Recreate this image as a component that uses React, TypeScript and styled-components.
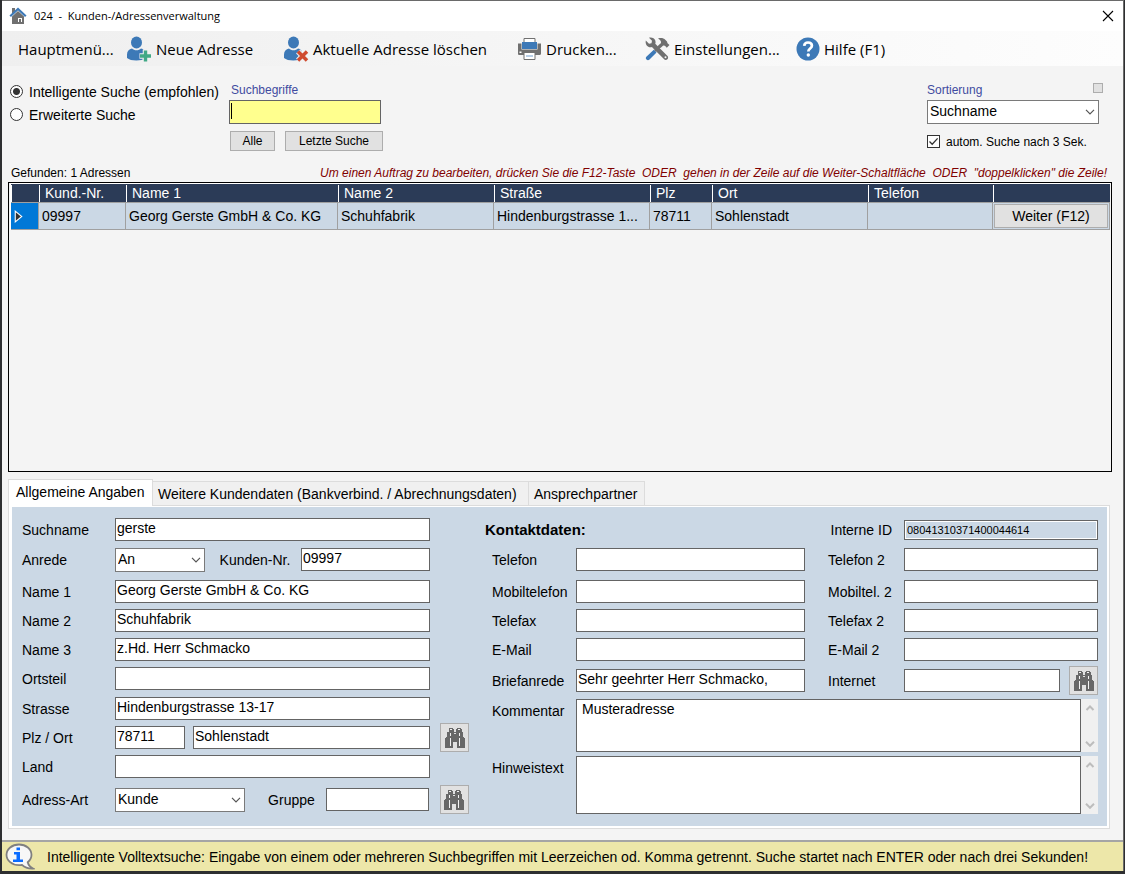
import React from "react";
import styled, { createGlobalStyle } from "styled-components";

const blue = "#3d79b7";
const gray = "#707070";
const panelBlue = "#cbd8e5";
const navy = "#2b3b57";

const GlobalStyle = createGlobalStyle`
  *, *::before, *::after { box-sizing: border-box; }
  body {
    margin: 0;
    background: #2e2f31;
    color: #000;
    font-family: "Liberation Sans", Arial, sans-serif;
    font-size: 14px;
    line-height: 20px;
  }
  button, input, select, textarea { font: inherit; color: inherit; border-radius: 0; margin: 0; }
`;

const Desktop = styled.div`
  display: flex;
  flex-direction: column;
  min-height: 100vh;
  padding: 0 1px 3px 2px;
`;

const Window = styled.main`
  flex: 1;
  display: flex;
  flex-direction: column;
  background: #f4f4f4;
  border-top: 1px solid #6a6a6a;
  border-right: 1px solid #6a6a6a;
`;

const TitleBar = styled.header`
  display: flex;
  align-items: center;
  height: 30px;
  padding: 0 9px 0 7px;
  gap: 7px;
  background: #fff;
  font-family: "Open Sans", "Noto Sans", sans-serif;
  font-size: 11px;
`;

const Title = styled.h1`
  flex: 1;
  margin: 0;
  font: inherit;
  white-space: pre;
`;

const CloseButton = styled.button`
  display: flex;
  padding: 0;
  border: 0;
  background: none;
`;

const Toolbar = styled.nav`
  display: flex;
  align-items: center;
  height: 35px;
  padding-left: 16px;
  background: linear-gradient(90deg, #efefef, #fdfdfd);
`;

const ToolButton = styled.button<{ $width: number }>`
  display: flex;
  align-items: center;
  gap: 4px;
  min-width: ${(p) => p.$width}px;
  padding: 0;
  border: 0;
  background: none;
  font-family: "Open Sans", "Noto Sans", sans-serif;
  font-size: 15px;
  white-space: nowrap;
`;

const Content = styled.div`
  flex: 1;
  display: flex;
  flex-direction: column;
  padding: 13px 11px 11px 6px;
`;

const SearchArea = styled.section`
  display: flex;
  align-items: flex-start;
  height: 84px;
`;

const ModeGroup = styled.div`
  width: 221px;
  padding-top: 1px;
`;

const ChoiceLabel = styled.label<{ $small?: boolean }>`
  display: flex;
  align-items: center;
  gap: 6px;
  height: 23px;
  padding-left: ${(p) => (p.$small ? 0 : 2)}px;
  font-size: ${(p) => (p.$small ? 12 : 14)}px;
  white-space: nowrap;
`;

const Radio = styled.input`
  appearance: none;
  width: 13px;
  height: 13px;
  border: 1px solid #333;
  border-radius: 50%;
  background: #fff;
  &:checked { background: radial-gradient(circle, #333 3px, #fff 4px); }
`;

const Check = styled.input`
  appearance: none;
  width: 13px;
  height: 13px;
  border: 1px solid #333;
  background: #fff;
  &:checked {
    background: #fff url("data:image/svg+xml,%3Csvg xmlns='http://www.w3.org/2000/svg' viewBox='0 0 11 11'%3E%3Cpath d='M1.5 5.5l2.7 2.7L9.6 2.4' fill='none' stroke='%23333' stroke-width='1.3'/%3E%3C/svg%3E");
  }
`;

const SearchColumn = styled.div`
  display: flex;
  flex-direction: column;
  flex: 1;
  align-items: flex-start;
`;

const SortColumn = styled.div`
  display: flex;
  flex-direction: column;
  width: 185px;
`;

const CaptionRow = styled.div`
  display: flex;
  justify-content: space-between;
  align-items: flex-start;
  width: 100%;
  height: 21px;
  padding-right: 9px;
`;

const Caption = styled.label<{ $indent?: boolean }>`
  padding-left: ${(p) => (p.$indent ? 2 : 0)}px;
  color: #3f4ba0;
  font-size: 12px;
  line-height: 23px;
`;

const MiniButton = styled.button`
  width: 10px;
  height: 10px;
  margin-top: 4px;
  padding: 0;
  border: 1px solid #adadad;
  background: #e1e1e1;
`;

const SearchInput = styled.input`
  width: 152px;
  height: 24px;
  padding: 0 3px;
  border: 1px solid #646464;
  background: linear-gradient(#000, #000) 1px 2px / 1px 16px no-repeat, #ffff8e;
  outline: none;
`;

const ButtonRow = styled.div`
  display: flex;
  gap: 10px;
  padding: 7px 0 0 1px;
`;

const CheckRow = styled.div`
  padding-top: 6px;
`;

const PushButton = styled.button<{ $width: number }>`
  width: ${(p) => p.$width}px;
  height: 20px;
  padding: 0;
  border: 1px solid #adadad;
  background: #e1e1e1;
  font-size: 12px;
  line-height: 18px;
`;

const SelectBox = styled.div<{ $width: number }>`
  display: grid;
  flex: none;
  width: ${(p) => p.$width}px;
  height: 24px;
  border: 1px solid #7a7a7a;
  background: #fff;
  & > * { grid-area: 1 / 1; }
  & > svg { align-self: center; justify-self: end; margin-right: 3px; pointer-events: none; }
`;

const NativeSelect = styled.select`
  appearance: none;
  width: 100%;
  padding: 0 20px 2px 2px;
  border: 0;
  background: none;
  outline: none;
`;

const HintRow = styled.div`
  display: flex;
  justify-content: space-between;
  height: 19px;
  padding: 0 5px 0 3px;
  font-size: 12px;
  line-height: 21px;
  white-space: pre;
`;

const Hint = styled.em`
  color: #800000;
`;

const GridFrame = styled.section`
  flex: 1;
  min-height: 120px;
  border: 1px solid #000;
  padding: 1px 1px 0;
`;

const Grid = styled.table`
  width: 100%;
  table-layout: fixed;
  border-collapse: separate;
  border-spacing: 0;
  border-left: 1px solid #fff;
  box-shadow: 0 -1px 0 #fff;
`;

const HeadCell = styled.th`
  height: 19px;
  padding: 0 0 0 6px;
  background: linear-gradient(#fff, #fff) 0 1px / 1px 17px no-repeat, ${navy};
  color: #fff;
  font-weight: 400;
  line-height: 18px;
  text-align: left;
  border-bottom: 1px solid #a0a0a0;
`;

const Cell = styled.td<{ $action?: boolean }>`
  height: 27px;
  padding: ${(p) => (p.$action ? "1px" : "0 2px 0 3px")};
  background: ${panelBlue};
  border-right: 1px solid #a0a0a0;
  border-bottom: 1px solid #a0a0a0;
  white-space: nowrap;
`;

const MarkerCell = styled(Cell)`
  background: #0078d7;
  line-height: 0;
`;

const NextButton = styled.button`
  display: block;
  width: 100%;
  height: 24px;
  padding: 0;
  border: 1px solid #adadad;
  background: #e1e1e1;
  line-height: 22px;
`;

const TabList = styled.div`
  display: flex;
  align-items: flex-end;
  height: 33px;
`;

const Tab = styled.button<{ $width: number; $active?: boolean }>`
  position: relative;
  min-width: ${(p) => p.$width}px;
  height: ${(p) => (p.$active ? 27 : 24)}px;
  margin-bottom: ${(p) => (p.$active ? -1 : 0)}px;
  padding: ${(p) => (p.$active ? "0 7px 2px" : "0 5px")};
  border: 1px solid #dcdcdc;
  border-left-width: ${(p) => (p.$active ? 1 : 0)}px;
  border-bottom: 0;
  background: ${(p) => (p.$active ? "#fff" : "#f0f0f0")};
  line-height: 22px;
  text-align: left;
  white-space: nowrap;
`;

const TabPanel = styled.section`
  margin-right: 2px;
  padding: 1px 2px 2px 3px;
  border: 1px solid #dcdcdc;
  background: #fff;
`;

const Form = styled.form`
  display: flex;
  gap: 16px;
  padding: 11px 9px 10px 10px;
  background: ${panelBlue};
`;

const AddressGrid = styled.div`
  flex: none;
  display: grid;
  grid-template-columns: 93px 315px 39px;
  grid-template-rows: 30px 32px 29px 29px 29px 30px 29px 29px 33px 28px;
  align-items: start;
`;

const ContactGrid = styled.div`
  flex: 1;
  display: grid;
  grid-template-columns: 91px minmax(0, 229fr) 99px minmax(0, 194fr);
  grid-template-rows: 30px 32px 29px 29px 31px 30px 57px 58px;
  align-items: start;
`;

const FieldLabel = styled.label<{ $indent?: number }>`
  padding-left: ${(p) => p.$indent ?? 0}px;
  line-height: 24px;
  white-space: nowrap;
`;

const IdLabel = styled(FieldLabel)`
  justify-self: end;
  padding-right: 12px;
`;

const GroupTitle = styled.h2`
  grid-column: span 2;
  margin: 0;
  font-size: 15px;
  line-height: 24px;
`;

const Line = styled.div<{ $gap?: number; $wide?: boolean }>`
  display: flex;
  align-items: center;
  justify-content: space-between;
  gap: ${(p) => p.$gap ?? 0}px;
  height: 23px;
  grid-column: ${(p) => (p.$wide ? "span 2" : "auto")};
`;

const TextInput = styled.input<{ $width?: number }>`
  width: ${(p) => (p.$width ? `${p.$width}px` : "100%")};
  min-width: 0;
  height: 23px;
  padding: 0 2px 3px 1px;
  border: 1px solid #646464;
  background: #fff;
  outline: none;
`;

const IdInput = styled(TextInput)`
  height: 20px;
  margin-top: 2px;
  padding: 0 2px 1px;
  background: ${panelBlue};
  box-shadow: inset 0 0 0 1px #fff;
  font-size: 11px;
`;

const IconButton = styled.button`
  flex: none;
  display: flex;
  align-items: center;
  justify-content: center;
  width: 29px;
  height: 29px;
  padding: 0;
  border: 1px solid #adadad;
  background: #e1e1e1;
`;

const MemoBox = styled.div<{ $height: number }>`
  grid-column: span 3;
  display: flex;
  height: ${(p) => p.$height}px;
`;

const Memo = styled.textarea`
  flex: 1;
  padding: 0 5px;
  border: 1px solid #646464;
  background: #fff;
  line-height: 18px;
  resize: none;
  outline: none;
  overflow: hidden;
`;

const ScrollRail = styled.div`
  display: flex;
  flex-direction: column;
  justify-content: space-between;
  align-items: center;
  width: 17px;
  padding: 6px 0 5px;
  background: #f0f0f0;
`;

const StatusBar = styled.footer`
  display: flex;
  align-items: center;
  gap: 12px;
  height: 31px;
  padding-left: 3px;
  border-top: 2px solid #a5a5a5;
  background: #ede7a9;
  white-space: nowrap;
`;

const HomeIcon = () => (
  <svg width="18" height="18" viewBox="0 0 18 18" aria-hidden="true">
    <path d="M3 1h3v3L3 7z" fill={gray} />
    <path d="M3 9.500L9 4l6 5.500V17H3z" fill={gray} />
    <path d="M9 11h4v4H9z" fill="#fff" />
    <path d="M10 12h2v3h-2z" fill={gray} />
    <path d="M1.200 9.200L9 2l7.800 7.200" fill="none" stroke={blue} strokeWidth="2.200" />
  </svg>
);

const PersonIcon = ({ remove }: { remove?: boolean }) => (
  <svg width="26" height="26" viewBox="0 0 26 26" aria-hidden="true">
    <ellipse cx="10.500" cy="6.500" rx="5.500" ry="6" fill={blue} />
    <path d="M1 22v-3.500c0-3 2-5.500 5-6 1.200 1.200 2.700 1.800 4.500 1.800s3.300-.6 4.500-1.800c2.500.4 4.300 2.300 4.300 5V22c-2 1.700-5 2.500-9 2.500S3 23.700 1 22z" fill={blue} />
    {remove ? (
      <path d="M15 15.500l9 9M24 15.500l-9 9" stroke="#f1f1f1" strokeWidth="5.500" />
    ) : (
      <path d="M19.500 13.500v12.500M13.500 20H26" stroke="#f1f1f1" strokeWidth="5.500" />
    )}
    {remove ? (
      <path d="M15 15.500l9 9M24 15.500l-9 9" stroke="#cf4a2e" strokeWidth="3.500" />
    ) : (
      <path d="M19.500 14.500v11M14 20h11" stroke="#41a986" strokeWidth="3.400" />
    )}
  </svg>
);

const PrinterIcon = () => (
  <svg width="25" height="24" viewBox="0 0 25 24" aria-hidden="true">
    <path d="M1 6.500h3.500v6h16v-6H24v10c0 .8-.5 1.500-1.500 1.500h-20C1.500 18 1 17.500 1 16.500z" fill={gray} />
    <path d="M7 1.500h11v4H7z" fill="#fff" stroke={gray} />
    <path d="M5 5h15v7H5z" fill={blue} />
    <path d="M7 15.500h11v7H7z" fill="#fff" stroke={gray} />
    <path d="M9 18h7v2H9z" fill="#b9cfe6" />
    <path d="M2.500 14.500h2v1.500h-2z" fill="#fff" />
  </svg>
);

const ToolsIcon = () => (
  <svg width="25" height="24" viewBox="0 0 25 24" aria-hidden="true">
    <path d="M15.500 8.500L10 14" stroke={gray} strokeWidth="2.500" />
    <path d="M13 1.500c3-1 5.500-.5 7.500 1.500l1.500 1.500.5 1.700L24.500 8l-2.700 2.700-1.900-1.900-1.700-.2-2.700 2.400-2.300-2.300L16 6c.2-2-.8-3.400-3-4.500z" fill={gray} />
    <path d="M8.800 12.800l2.700 2.700-7 7c-1 1-2 1-3 .1s-.9-2 .1-3z" fill={blue} />
    <path d="M.8 3.500L4 6.700l2.500-.5.500-2.500L4 .8c2.700-.7 5.500.4 6.300 2.600.4 1.200.4 2.200 0 3.300l12 12c1.100 1.100 1.100 2.500.1 3.500s-2.500 1-3.500-.1l-12-12c-1.200.4-2.500.2-3.600-.4C1.200 8.600.2 6.200.8 3.500z" fill={gray} />
    <circle cx="20.500" cy="20.300" r="1" fill="#f4f4f4" />
  </svg>
);

const HelpIcon = () => (
  <svg width="24" height="24" viewBox="0 0 24 24" aria-hidden="true">
    <circle cx="12" cy="12" r="11.500" fill={blue} />
    <path d="M8.200 8.800C8.400 6.600 10 5.500 12 5.500c2.300 0 3.900 1.200 3.900 3.200 0 2.800-3.600 2.800-3.600 5.800" fill="none" stroke="#fff" strokeWidth="2.700" />
    <circle cx="12.300" cy="18" r="1.700" fill="#fff" />
  </svg>
);

const CloseIcon = () => (
  <svg width="12" height="12" viewBox="0 0 12 12" aria-hidden="true">
    <path d="M1 1l10 10M11 1L1 11" stroke="#000" strokeWidth="1.100" />
  </svg>
);

const Chevron = ({ up, heavy }: { up?: boolean; heavy?: boolean }) => (
  <svg width="10" height="6" viewBox="0 0 10 6" aria-hidden="true">
    <path
      d={up ? "M1.500 5L5 1.500 8.500 5" : "M1 .8L5 4.800 9 .8"}
      fill="none"
      stroke={heavy ? "#bdbdbd" : "#555"}
      strokeWidth={heavy ? 2 : 1.2}
    />
  </svg>
);

const BinocularsIcon = () => (
  <svg width="20" height="20" viewBox="0 0 20 20" shapeRendering="crispEdges" aria-hidden="true">
    <path d="M4 0h4v1h1v3h2V1h1V0h4v1h1v3h1v5h1v1h1v10h-8v-6H8v6H0V10h1V9h1V4h2z" fill="#686868" />
    <path d="M5 1h2v1H5zM13 1h2v1h-2zM5 5h1v3H5zM14 5h1v3h-1zM5 10h1v8H5zM14 10h1v8h-1z" fill="#f2f2f2" />
    <path d="M9 5h2v1H9z" fill="#e1e1e1" />
  </svg>
);

const InfoIcon = () => (
  <svg width="30" height="28" viewBox="0 0 30 28" aria-hidden="true">
    <path d="M14 1.500c7 0 12.500 4.500 12.500 10.300 0 3-1.400 5.600-3.800 7.500.6 2.500 2.500 4.800 5.300 6.200-4.500.2-8.300-1-11-3.600-1 .2-2 .3-3 .3C7 22.200 1.500 17.600 1.500 11.800S7 1.500 14 1.500z" fill="#f7f7f7" stroke="#808080" strokeWidth="1.800" />
    <path d="M11.500 4.500H15v2.700h-3.500zM9 9h6v7.500h3V19H8v-2.500h3.500v-5H9z" fill="#0a6cff" />
  </svg>
);

type Option = { id: string; width: number; value: string };

const Dropdown = ({ id, width, value }: Option) => (
  <SelectBox $width={width}>
    <NativeSelect id={id} defaultValue={value}>
      <option>{value}</option>
    </NativeSelect>
    <Chevron />
  </SelectBox>
);

const MemoField = ({ id, height, value }: { id: string; height: number; value: string }) => (
  <MemoBox $height={height}>
    <Memo id={id} defaultValue={value} />
    <ScrollRail>
      <Chevron up heavy />
      <Chevron heavy />
    </ScrollRail>
  </MemoBox>
);

const FindButton = ({ label }: { label: string }) => (
  <IconButton type="button" aria-label={label}>
    <BinocularsIcon />
  </IconButton>
);

const tools = [
  { text: "Hauptmenü...", width: 108, icon: null },
  { text: "Neue Adresse", width: 157, icon: <PersonIcon /> },
  { text: "Aktuelle Adresse löschen", width: 234, icon: <PersonIcon remove /> },
  { text: "Drucken...", width: 128, icon: <PrinterIcon /> },
  { text: "Einstellungen...", width: 151, icon: <ToolsIcon /> },
  { text: "Hilfe (F1)", width: 95, icon: <HelpIcon /> },
];

const columns: { title: string; width?: number }[] = [
  { title: "Kund.-Nr.", width: 87 },
  { title: "Name 1" },
  { title: "Name 2", width: 156 },
  { title: "Straße", width: 156 },
  { title: "Plz", width: 62 },
  { title: "Ort", width: 156 },
  { title: "Telefon", width: 125 },
  { title: "", width: 117 },
];

const address = ["09997", "Georg Gerste GmbH & Co. KG", "Schuhfabrik", "Hindenburgstrasse 1...", "78711", "Sohlenstadt", ""];

const contacts = [
  ["Telefon", "Telefon 2"],
  ["Mobiltelefon", "Mobiltel. 2"],
  ["Telefax", "Telefax 2"],
  ["E-Mail", "E-Mail 2"],
];

const WideField = ({ label, value }: { label: string; value: string }) => (
  <>
    <FieldLabel htmlFor={label}>{label}</FieldLabel>
    <TextInput id={label} defaultValue={value} />
    <span />
  </>
);

export default function App() {
  return (
    <Desktop>
      <GlobalStyle />
      <Window>
        <TitleBar>
          <HomeIcon />
          <Title>{"024  -  Kunden-/Adressenverwaltung"}</Title>
          <CloseButton type="button" aria-label="Schließen">
            <CloseIcon />
          </CloseButton>
        </TitleBar>
        <Toolbar>
          {tools.map((t) => (
            <ToolButton key={t.text} type="button" $width={t.width}>
              {t.icon}
              {t.text}
            </ToolButton>
          ))}
        </Toolbar>
        <Content>
          <SearchArea>
            <ModeGroup>
              <ChoiceLabel>
                <Radio type="radio" name="mode" defaultChecked />
                Intelligente Suche (empfohlen)
              </ChoiceLabel>
              <ChoiceLabel>
                <Radio type="radio" name="mode" />
                Erweiterte Suche
              </ChoiceLabel>
            </ModeGroup>
            <SearchColumn>
              <CaptionRow>
                <Caption htmlFor="terms" $indent>Suchbegriffe</Caption>
              </CaptionRow>
              <SearchInput id="terms" />
              <ButtonRow>
                <PushButton type="button" $width={45}>Alle</PushButton>
                <PushButton type="button" $width={98}>Letzte Suche</PushButton>
              </ButtonRow>
            </SearchColumn>
            <SortColumn>
              <CaptionRow>
                <Caption htmlFor="sort">Sortierung</Caption>
                <MiniButton type="button" aria-label="Optionen" />
              </CaptionRow>
              <Dropdown id="sort" width={172} value="Suchname" />
              <CheckRow>
                <ChoiceLabel $small>
                  <Check type="checkbox" defaultChecked />
                  autom. Suche nach 3 Sek.
                </ChoiceLabel>
              </CheckRow>
            </SortColumn>
          </SearchArea>
          <HintRow>
            <span>Gefunden: 1 Adressen</span>
            <Hint>{'Um einen Auftrag zu bearbeiten, drücken Sie die F12-Taste  ODER  gehen in der Zeile auf die Weiter-Schaltfläche  ODER  "doppelklicken" die Zeile!'}</Hint>
          </HintRow>
          <GridFrame>
            <Grid>
              <colgroup>
                <col style={{ width: 28 }} />
                {columns.map((c, i) => (
                  <col key={i} style={{ width: c.width }} />
                ))}
              </colgroup>
              <thead>
                <tr>
                  <HeadCell />
                  {columns.map((c, i) => (
                    <HeadCell key={i}>{c.title}</HeadCell>
                  ))}
                </tr>
              </thead>
              <tbody>
                <tr>
                  <MarkerCell>
                    <svg width="9" height="13" viewBox="0 0 8 12" aria-hidden="true">
                      <path d="M1 1l6 5-6 5z" fill="#333" stroke="#fff" />
                    </svg>
                  </MarkerCell>
                  {address.map((v, i) => (
                    <Cell key={i}>{v}</Cell>
                  ))}
                  <Cell $action>
                    <NextButton type="button">Weiter (F12)</NextButton>
                  </Cell>
                </tr>
              </tbody>
            </Grid>
          </GridFrame>
          <TabList role="tablist">
            <Tab type="button" role="tab" aria-selected $active $width={145}>Allgemeine Angaben</Tab>
            <Tab type="button" role="tab" $width={376}>Weitere Kundendaten (Bankverbind. / Abrechnungsdaten)</Tab>
            <Tab type="button" role="tab" $width={116}>Ansprechpartner</Tab>
          </TabList>
          <TabPanel role="tabpanel">
            <Form>
              <AddressGrid>
                <WideField label="Suchname" value="gerste" />
                <FieldLabel htmlFor="anrede">Anrede</FieldLabel>
                <Line>
                  <Dropdown id="anrede" width={90} value="An" />
                  <FieldLabel htmlFor="kdnr" $indent={4}>Kunden-Nr.</FieldLabel>
                  <TextInput id="kdnr" $width={129} defaultValue="09997" />
                </Line>
                <span />
                <WideField label="Name 1" value="Georg Gerste GmbH & Co. KG" />
                <WideField label="Name 2" value="Schuhfabrik" />
                <WideField label="Name 3" value="z.Hd. Herr Schmacko" />
                <WideField label="Ortsteil" value="" />
                <WideField label="Strasse" value="Hindenburgstrasse 13-17" />
                <FieldLabel htmlFor="plz">Plz / Ort</FieldLabel>
                <Line $gap={10} $wide>
                  <Line $gap={8}>
                    <TextInput id="plz" $width={70} defaultValue="78711" />
                    <TextInput aria-label="Ort" $width={237} defaultValue="Sohlenstadt" />
                  </Line>
                  <FindButton label="Ort suchen" />
                </Line>
                <WideField label="Land" value="" />
                <FieldLabel htmlFor="art">Adress-Art</FieldLabel>
                <Line $gap={10} $wide>
                  <Dropdown id="art" width={130} value="Kunde" />
                  <FieldLabel htmlFor="gruppe" $indent={12}>Gruppe</FieldLabel>
                  <TextInput id="gruppe" $width={103} />
                  <FindButton label="Gruppe suchen" />
                </Line>
              </AddressGrid>
              <ContactGrid>
                <GroupTitle>Kontaktdaten:</GroupTitle>
                <IdLabel htmlFor="intid">Interne ID</IdLabel>
                <IdInput id="intid" readOnly value="08041310371400044614" />
                {contacts.map(([a, b]) => (
                  <React.Fragment key={a}>
                    <FieldLabel htmlFor={a} $indent={7}>{a}</FieldLabel>
                    <TextInput id={a} />
                    <FieldLabel htmlFor={b} $indent={23}>{b}</FieldLabel>
                    <TextInput id={b} />
                  </React.Fragment>
                ))}
                <FieldLabel htmlFor="brief" $indent={7}>Briefanrede</FieldLabel>
                <TextInput id="brief" defaultValue="Sehr geehrter Herr Schmacko," />
                <FieldLabel htmlFor="web" $indent={23}>Internet</FieldLabel>
                <Line $gap={9}>
                  <TextInput id="web" />
                  <FindButton label="Internetseite öffnen" />
                </Line>
                <FieldLabel htmlFor="komm" $indent={7}>Kommentar</FieldLabel>
                <MemoField id="komm" height={53} value="Musteradresse" />
                <FieldLabel htmlFor="hinw" $indent={7}>Hinweistext</FieldLabel>
                <MemoField id="hinw" height={58} value="" />
              </ContactGrid>
            </Form>
          </TabPanel>
        </Content>
        <StatusBar>
          <InfoIcon />
          <span>Intelligente Volltextsuche: Eingabe von einem oder mehreren Suchbegriffen mit Leerzeichen od. Komma getrennt. Suche startet nach ENTER oder nach drei Sekunden!</span>
        </StatusBar>
      </Window>
    </Desktop>
  );
}
